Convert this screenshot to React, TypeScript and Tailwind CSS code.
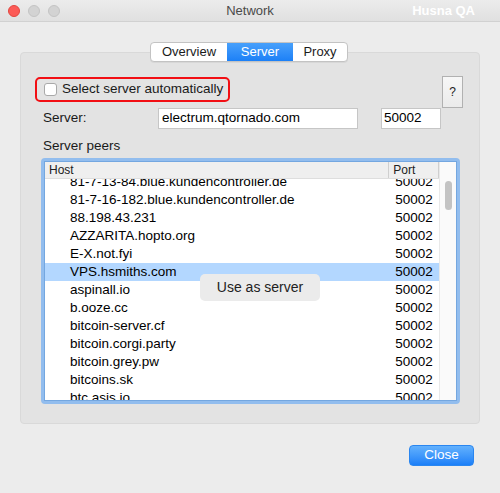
import React from "react";

const peers = [
  "81-7-13-84.blue.kundencontroller.de",
  "81-7-16-182.blue.kundencontroller.de",
  "88.198.43.231",
  "AZZARITA.hopto.org",
  "E-X.not.fyi",
  "VPS.hsmiths.com",
  "aspinall.io",
  "b.ooze.cc",
  "bitcoin-server.cf",
  "bitcoin.corgi.party",
  "bitcoin.grey.pw",
  "bitcoins.sk",
  "btc.asis.io",
];

function TitleBar() {
  return (
    <div className="relative h-[22px] flex items-center border-b border-[#d1d1d1] bg-gradient-to-b from-[#ececec] to-[#e0e0e0]">
      <div className="flex items-center gap-[8px] pl-[8px]">
        <span className="w-[12px] h-[12px] rounded-full bg-[#fc5b57] border border-[#e2463f]" />
        <span className="w-[12px] h-[12px] rounded-full bg-[#d3d3d3] border border-[#c4c4c4]" />
        <span className="w-[12px] h-[12px] rounded-full bg-[#d3d3d3] border border-[#c4c4c4]" />
      </div>
      <div className="absolute inset-0 flex items-center justify-center text-[13px] text-[#4a4a4a]">
        Network
      </div>
      <div className="absolute right-[25px] top-0 h-full flex items-center text-[13px] font-bold text-white">
        Husna QA
      </div>
    </div>
  );
}

function Tabs() {
  return (
    <div className="relative z-10 flex h-[20px] ml-[150px] w-[198px] rounded-[4px] border border-[#c3c3c3] bg-white text-[13px] text-[#1b1b1b] overflow-hidden shadow-[0_1px_0_rgba(0,0,0,0.05)]">
      <div className="w-[76px] flex items-center justify-center">Overview</div>
      <div className="w-[66px] flex items-center justify-center text-white bg-gradient-to-b from-[#47a0fb] to-[#1b80f7]">
        Server
      </div>
      <div className="flex-1 flex items-center justify-center">Proxy</div>
    </div>
  );
}

function PeersTable() {
  return (
    <div className="relative mt-[4px] ml-[20px] mr-[19px] h-[246px] rounded-[4px] border-[3px] border-[#92bdee]">
      <div className="h-full flex border border-[#74a7e0] bg-white overflow-hidden">
        <div className="flex-1 flex flex-col min-w-0">
          <div className="h-[17px] flex bg-[#efefef] border-b border-[#dedede] text-[12px] text-[#222]">
            <div className="w-[345px] pl-[4px] flex items-center">Host</div>
            <div className="w-[51px] border-l border-[#cfcfcf] border-r pl-[4px] flex items-center">Port</div>
          </div>
          <div className="flex-1 overflow-hidden">
            <div className="-mt-[6px]">
              {peers.map((host) => (
                <div
                  key={host}
                  className={
                    "h-[18px] flex items-center text-[13.5px] text-black " +
                    (host === "VPS.hsmiths.com" ? "bg-[#b3d7ff]" : "")
                  }
                >
                  <div className="w-[345px] pl-[25px] truncate">{host}</div>
                  <div className="w-[51px] pl-[7px]">50002</div>
                </div>
              ))}
            </div>
          </div>
        </div>
        <div className="w-[17px] bg-[#fafafa] border-l border-[#e9e9e9] flex justify-center pt-[19px]">
          <div className="w-[7px] h-[29px] rounded-full bg-[#c3c3c3]" />
        </div>
      </div>
      <div className="absolute left-[156px] top-[113px] w-[120px] h-[27px] rounded-[5px] bg-[#ebebeb] flex items-center justify-center text-[14px] text-[#222]">
        Use as server
      </div>
    </div>
  );
}

export default function App() {
  return (
    <div className="w-[500px] h-[493px] bg-[#ececec] flex flex-col font-['Liberation_Sans',Arial,sans-serif] overflow-hidden">
      <TitleBar />
      <div className="flex flex-col pt-[20px]">
        <Tabs />
        <div className="-mt-[10px] mx-[20px] h-[372px] rounded-[4px] bg-[#e3e3e3] border border-[#d9d9d9] flex flex-col">
          <div className="flex items-start justify-between pt-[23px] pl-[14px] pr-[16px] h-[55px]">
            <div className="mt-[1px] h-[25px] w-[195px] rounded-[5px] border-2 border-[#f20f14] flex items-center pl-[7px] gap-[5px]">
              <span className="w-[13px] h-[13px] rounded-[3px] border border-[#a9a9a9] bg-white" />
              <span className="text-[13.5px] text-[#1a1a1a]">Select server automatically</span>
            </div>
            <div className="w-[21px] h-[32px] border border-[#b1b1b1] bg-gradient-to-b from-[#f7f7f7] to-[#ebebeb] flex items-center justify-center text-[12px] text-[#222]">
              ?
            </div>
          </div>
          <div className="flex items-center pl-[22px] h-[21px]">
            <div className="w-[115px] text-[13.5px] text-[#1a1a1a]">Server:</div>
            <div className="w-[200px] h-[21px] bg-white border border-[#c6c6c6] flex items-center pl-[3px] text-[13.5px] text-black">
              electrum.qtornado.com
            </div>
            <div className="ml-[23px] w-[60px] h-[21px] bg-white border border-[#c6c6c6] flex items-center pl-[2px] text-[13.5px] text-black">
              50002
            </div>
          </div>
          <div className="pl-[22px] mt-[9px] h-[16px] flex items-center text-[13.5px] text-[#1a1a1a]">
            Server peers
          </div>
          <PeersTable />
        </div>
        <div className="flex justify-end pr-[26px] mt-[21px]">
          <div className="w-[65px] h-[21px] rounded-[4px] bg-gradient-to-b from-[#62b1fd] to-[#1a7ff8] border border-[#2a86f0] flex items-center justify-center text-[13.5px] text-white">
            Close
          </div>
        </div>
      </div>
    </div>
  );
}
